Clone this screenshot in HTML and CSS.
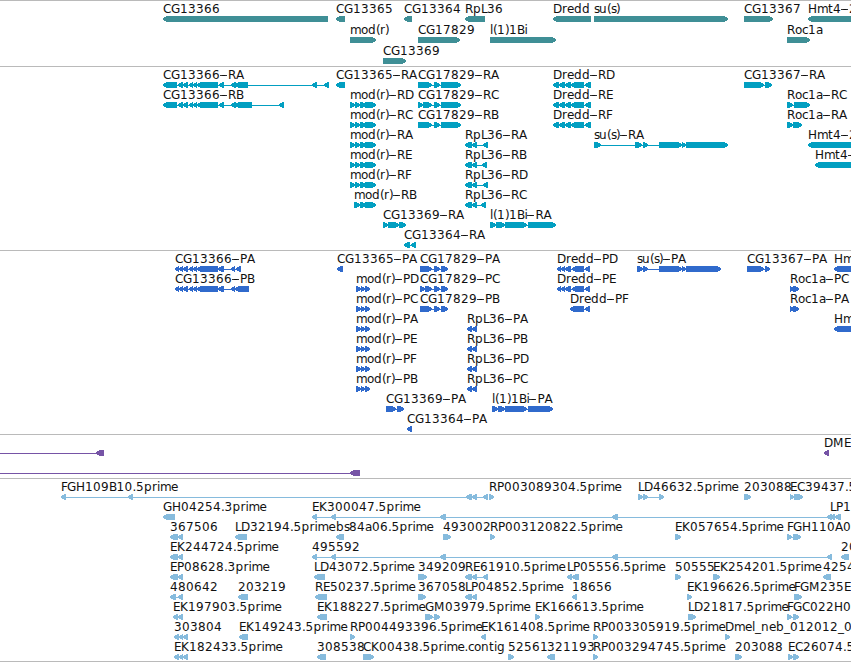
FILE: index.html
```html
<!DOCTYPE html>
<html lang="en">
<head>
<meta charset="utf-8">
<title>Genome annotation tracks</title>
<link rel="stylesheet" href="styles.css">
</head>
<body>
<main class="browser">
  <section class="track track-gene" data-track="gene"></section>
  <section class="track track-transcript" data-track="transcript"></section>
  <section class="track track-protein" data-track="protein"></section>
  <section class="track track-repeat" data-track="repeat"></section>
  <section class="track track-est" data-track="est"></section>
</main>
<script src="tracks.js"></script>
</body>
</html>
```
FILE: styles.css
```css
html,
body {
  margin: 0;
  background: #fff;
}

.browser {
  display: flex;
  flex-direction: column;
  width: 851px;
  height: 662px;
  box-sizing: border-box;
  overflow: hidden;
  border-bottom: 1px solid #bababa;
}

.track {
  flex: none;
  box-sizing: border-box;
  border-top: 1px solid #bababa;
  overflow: hidden;
}

.track svg {
  display: block;
  width: 100%;
  height: 100%;
  font-family: "DejaVu Sans", sans-serif;
  font-size: 12px;
}

.track-gene { height: 66px; color: #3f8f96; }
.track-transcript { height: 184px; color: #029fc1; }
.track-protein { height: 184px; color: #306acc; }
.track-repeat { height: 44px; color: #7654a6; }
.track-est { height: 183px; color: #86bbdd; }

.shape {
  fill: currentColor;
  shape-rendering: crispEdges;
}

.label {
  fill: #111;
}

.dash {
  fill: #333;
  shape-rendering: crispEdges;
}
```
FILE: tracks.js
```js
// One feature per line: row | label | direction | exon ranges
const rnaTail = "219-224 231-236";
const rnaHead = "163-177 178-183 183-188 189-193 193-197 197-218 " + rnaTail;
const protHead = "175-179 179-183 183-188 189-193 193-197 197-218 218-224 231-235";
const modRna = "350-355 355-360 360-366 365-376";
const modProt = "356-361 361-365 365-370";
const dreddRna = "553-559 559-565 565-571 571-584 585-591";
const dreddProt = "557-561 561-565 565-571 572-584 585-590";
const longEst = "312-317 331-336 440-446 612-618 827-832";

const tracks = {
  gene: { pitch: 21, features: `
0|CG13366|L|163-328
0|CG13365|L|336-345
0|CG13364|L|404-412
0|RpL36|L|465-485
0|Dredd|L|553-591
0|su(s)|R|594-728
0|CG13367|R|744-773
0|Hmt4-2|L|808-870
1|mod(r)|R|350-376
1|CG17829|R|418-460
1|l(1)1Bi|R|490-556
1|Roc1a|R|787-810
2|CG13369|R|383-406` },

  transcript: { pitch: 20, features: `
0|CG13366-RA|L|${rnaHead} 235-248 312-317 324-329
1|CG13366-RB|L|${rnaHead} 235-252 279-284
0|CG13365-RA|L|336-345
0|CG17829-RA|R|418-432 434-440 441-461
1|CG17829-RC|R|418-423 423-432 434-440 441-461
2|CG17829-RB|R|418-432 434-440 441-461
0|Dredd-RD|L|${dreddRna}
1|Dredd-RE|L|${dreddRna}
2|Dredd-RF|L|${dreddRna}
0|CG13367-RA|R|744-764 765-772
1|mod(r)-RD|R|${modRna}
2|mod(r)-RC|R|${modRna}
3|mod(r)-RA|R|${modRna}
4|mod(r)-RE|R|${modRna}
5|mod(r)-RF|R|${modRna}
6|mod(r)-RB|R|354-360 360-366 365-376
3|RpL36-RA|L|465-472 472-477 483-488
4|RpL36-RB|L|465-472 472-477 482-487
5|RpL36-RD|L|465-472 472-477 483-488
6|RpL36-RC|L|465-472 472-477 481-486
3|su(s)-RA|R|594-601 635-642 643-648 659-682 682-686 686-728
1|Roc1a-RC|R|787-793 794-810
2|Roc1a-RA|R|787-793 793-802
3|Hmt4-2|L|808-870
4|Hmt4-|L|815-870
7|CG13369-RA|R|383-388 388-399 399-406
7|l(1)1Bi-RA|R|490-496 496-505 505-527 528-556
8|CG13364-RA|L|404-410 411-416` },

  protein: { pitch: 20, features: `
0|CG13366-PA|L|${protHead} 236-241
1|CG13366-PB|L|${protHead} 235-249
0|CG13365-PA|L|337-343
0|CG17829-PA|R|420-432 434-440 441-448
1|CG17829-PC|R|420-425 425-432 434-440 441-448
2|CG17829-PB|R|420-432 434-440 441-448
0|Dredd-PD|L|${dreddProt}
1|Dredd-PE|L|${dreddProt}
2|Dredd-PF|L|570-584 585-590
0|su(s)-PA|R|637-643 643-648 659-682 682-686 686-721
0|CG13367-PA|R|747-764 765-770
0|Hm|L|834-870
3|Hm|L|834-870
1|Roc1a-PC|R|790-794 793-799
2|Roc1a-PA|R|790-794 793-799
1|mod(r)-PD|R|${modProt}
2|mod(r)-PC|R|${modProt}
3|mod(r)-PA|R|${modProt}
4|mod(r)-PE|R|${modProt}
5|mod(r)-PF|R|${modProt}
6|mod(r)-PB|R|${modProt}
3|RpL36-PA|L|467-472 472-477
4|RpL36-PB|L|467-472 472-477
5|RpL36-PD|L|467-472 472-477
6|RpL36-PC|L|467-472 472-477
7|CG13369-PA|R|386-396 397-404
7|l(1)1Bi-PA|R|492-498 498-505 505-527 528-553
8|CG13364-PA|L|407-412` },

  repeat: { pitch: 20, features: `
0||L|0-0 96-104
1||L|0-0 350-360
0|DME|L|824-829` },

  est: { pitch: 20, features: `
0|FGH109B10.5prime|L|61-66 128-133 466-472 472-477 483-488
0|RP003089304.5prime|R|489-494
0|LD46632.5prime|R|638-643 643-648 659-664
0|203088|R|744-751
0|EC39437.5|R|790-794 794-803
1|GH04254.3prime|L|163-175
1|EK300047.5prime|L|${longEst}
1|LP1|L|830-835 835-841
2|367506|L|170-178 178-183
2|LD32194.5prime|L|235-247
2|bs84a06.5prime|L|336-344
2|493002|R|443-451
2|RP003120822.5prime|R|490-495
2|EK057654.5prime|R|675-681
2|FGH110A0|R|787-792 793-801
3|EK244724.5prime|L|170-178 178-183
3|495592|L|${longEst}
3|20|L|841-849
4|EP08628.3prime|L|170-178 178-183
4|LD43072.5prime|L|314-325
4|349209|R|418-427
4|RE61910.5prime|L|465-472 472-477 483-488
4|LP05556.5prime|L|567-572 572-579
4|50555|R|675-681
4|EK254201.5prime|R|713-720
4|4254|L|823-831
5|480642|L|170-176 178-183
5|203219|L|238-248
5|RE50237.5prime|L|315-327
5|367058|R|418-426
5|LP04852.5prime|L|465-472 472-477
5|18656|L|572-577
5|EK196626.5prime|R|687-692
5|FGM235E|R|794-802
6|EK197903.5prime|L|173-178 178-183
6|EK188227.5prime|L|317-327
6|GM03979.5prime|R|425-433 434-440
6|EK166613.5prime|R|535-540
6|LD21817.5prime|R|688-696
6|FGC022H0|R|787-792 793-799
7|303804|L|174-179 179-183 183-188
7|EK149243.5prime|L|239-248
7|RP004493396.5prime|R|350-355
7|EK161408.5prime|L|481-486
7|RP003305919.5prime|R|593-598
7|Dmel_neb_012012_0|R|725-730
8|EK182433.5prime|L|174-179 179-183 183-188
8|308538|L|317-326
8|CK00438.5prime.contig|R|363-374
8|52561|R|508-514
8|321193|L|547-555
8|RP003294745.5prime|R|593-598
8|203088|R|735-742
8|EC26074.5|R|788-793 793-799` }
};

const advance = {
  A: 8, B: 7.5, C: 8, D: 9, E: 7, F: 6, G: 9, H: 9, K: 8, L: 6, M: 11, P: 7, R: 8,
  a: 7, b: 8, c: 6, d: 8, e: 7, g: 8, i: 3, l: 3, m: 11, n: 8, o: 7, p: 8,
  r: 5, s: 5, t: 5, u: 8, "(": 4, ")": 4, "-": 8, ".": 3.5, _: 6
};

const NS = "http://www.w3.org/2000/svg";

function add(parent, name, attrs) {
  const node = document.createElementNS(NS, name);
  for (const key in attrs) node.setAttribute(key, attrs[key]);
  parent.appendChild(node);
  return node;
}

// Stepped arrowhead, six pixel rows high, pointing from b to a.
function arrowPath(a, b, top, dir) {
  const [tip, base] = dir === "L" ? [a, b] : [b, a];
  const s = dir === "L" ? 1 : -1;
  const at = n => tip + s * Math.min(n, b - a);
  return `M${base} ${top}H${at(3)}v1H${at(1)}v1H${tip}v2H${at(1)}v1H${at(3)}v1H${base}Z`;
}

for (const section of document.querySelectorAll(".track")) {
  const { pitch, features } = tracks[section.dataset.track];
  const svg = add(section, "svg", {});
  for (const line of features.trim().split("\n")) {
    const [row, label, dir, ranges] = line.split("|");
    const y = row * pitch;
    const exons = ranges.split(" ").map(r => r.split("-").map(Number));
    const start = exons[0][0];
    const stop = exons[exons.length - 1][1];
    if (exons.length > 1) {
      add(svg, "rect", { class: "shape", x: start, y: y + 18, width: stop - start, height: 1 });
    }
    for (const [a, b] of exons) {
      if (b > a) add(svg, "path", { class: "shape", d: arrowPath(a, b, y + 15, dir) });
    }
    if (label) {
      let x = start;
      const xs = [...label].map(ch => {
        const at = ch === "-" ? x + 1.5 : x;
        if (ch === "-") add(svg, "rect", { class: "dash", x: Math.floor(x), y: y + 8, width: 7, height: 1 });
        x += advance[ch] || 8;
        return at;
      });
      add(svg, "text", { class: "label", x: xs.join(" "), y: y + 12 }).textContent = label;
    }
  }
}
```
